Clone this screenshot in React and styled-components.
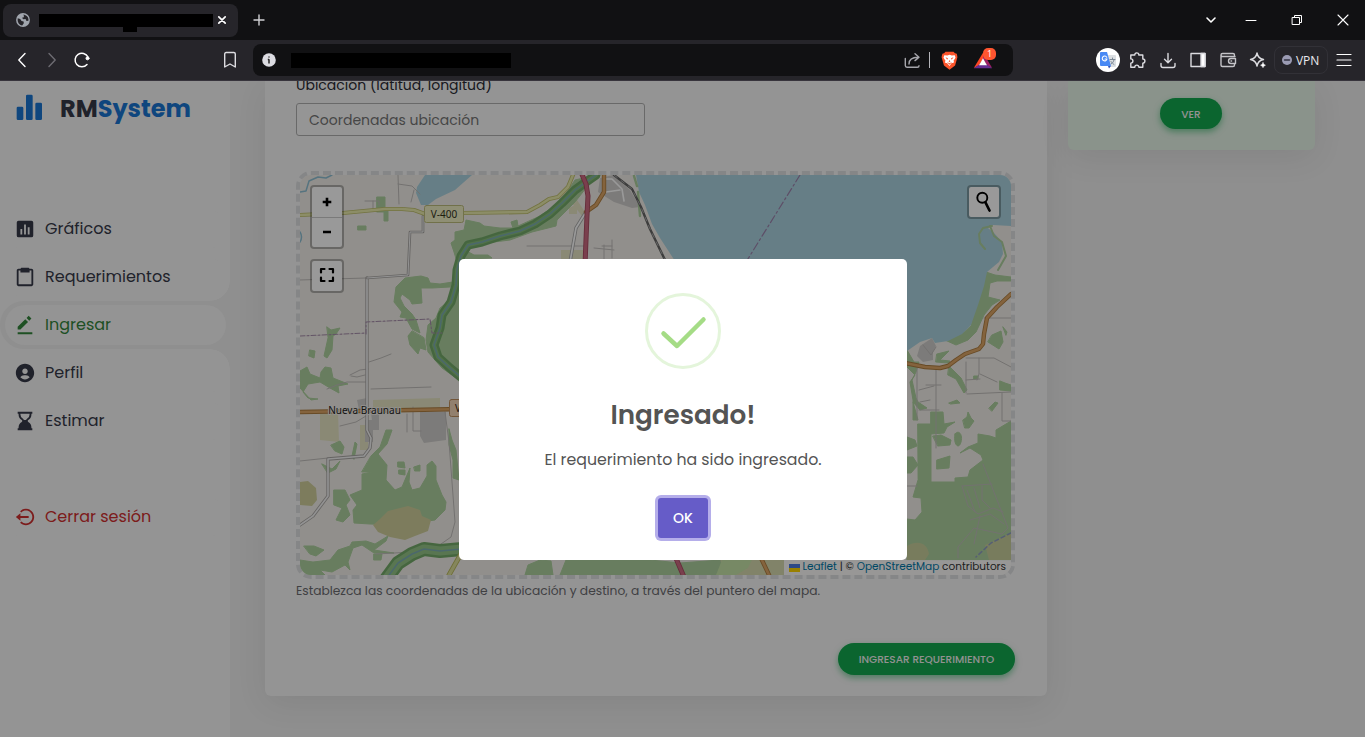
import React from 'react';
import styled, { createGlobalStyle, css } from 'styled-components';
import {
  BiSolidBarChartAlt2,
  BiSolidBarChartSquare,
  BiClipboard,
  BiSolidEditAlt,
  BiSolidUserCircle,
  BiSolidHourglassBottom,
  BiLogOutCircle,
} from 'react-icons/bi';

const GlobalStyle = createGlobalStyle`
  *, *::before, *::after { box-sizing: border-box; }
  body { margin: 0; background: #eee; font-family: Poppins, Inter, sans-serif; overflow: hidden; }
`;

const Window = styled.div`
  display: flex;
  flex-direction: column;
  width: 1365px;
  height: 737px;
  overflow: hidden;
`;

/* ---------- browser chrome ---------- */

const TabStrip = styled.div`
  display: flex;
  align-items: center;
  height: 40px;
  padding: 0 0 0 3px;
  background: #111113;
  flex: none;
`;

const Tab = styled.div`
  display: flex;
  align-items: center;
  width: 235px;
  height: 33px;
  padding: 0 10px 0 13px;
  border-radius: 8px;
  background: #26252a;
`;

const Redacted = styled.div`
  width: ${(p) => p.$w}px;
  height: ${(p) => p.$h}px;
  margin-left: ${(p) => p.$ml}px;
  background: #000;
  flex: none;
`;

const TabTitle = styled(Redacted)`
  position: relative;
  &::after {
    content: '';
    position: absolute;
    left: 84px;
    top: 13px;
    width: 14px;
    height: 5px;
    background: #000;
  }
`;

const Icon = styled.svg`
  display: block;
  flex: none;
  width: ${(p) => p.$w || p.$s}px;
  height: ${(p) => p.$s}px;
  margin-left: ${(p) => p.$ml || 0}px;
  fill: none;
  stroke: ${(p) => p.$c || '#dcdce0'};
  stroke-width: ${(p) => p.$sw || 1.4};
  stroke-linecap: round;
  stroke-linejoin: round;
`;

const Toolbar = styled.div`
  display: flex;
  align-items: center;
  height: 41px;
  padding-left: 12px;
  background: #26252a;
  border-bottom: 1px solid #37343c;
  flex: none;
`;

const AddressBar = styled.div`
  display: flex;
  align-items: center;
  width: 760px;
  height: 32px;
  margin-left: 14px;
  padding-left: 9px;
  border-radius: 8px;
  background: #111113;
`;

const Divider = styled.div`
  width: 1px;
  height: 16px;
  margin-left: 8px;
  background: #b5b5ba;
`;

const RewardsSlot = styled.div`
  position: relative;
  margin-left: 15px;
`;

const RewardsBadge = styled.span`
  position: absolute;
  left: 10px;
  top: -4px;
  width: 13px;
  height: 12px;
  border-radius: 5px;
  background: #ff5530;
  color: #fff;
  font: 9px/12px "Open Sans", sans-serif;
  text-align: center;
`;

const VpnButton = styled.div`
  display: flex;
  align-items: center;
  gap: 4px;
  width: 54px;
  height: 28px;
  margin-left: 7px;
  padding-left: 7px;
  border: 1px solid #323137;
  border-radius: 8px;
  color: #e9e9ee;
  font: 12px "Open Sans", sans-serif;
  letter-spacing: -0.1px;
`;

function BrowserChrome() {
  return (
    <>
      <TabStrip>
        <Tab>
          <Icon $s={14} viewBox="0 0 16 16" $c="none">
            <circle cx="8" cy="8" r="7.9" fill="#a0a5ad" />
            <path d="M2 6 4.800 6.800 6.300 9l2.400.6.2 2.200-1.800 2.500C3.500 13.600 1.300 10.500 2 6ZM8 2l1.300 1-.8 2L6.800 5.500l1.500 1.700 2.600-.4 1.100 2.300 2.200-.2C15 4.800 11.500 1.800 8 2Z" fill="#26252a" />
          </Icon>
          <TabTitle $w={174} $h={13} $ml={9} />
          <Icon $s={10} $ml={4} viewBox="0 0 10 10" $c="#fff" $sw={1.7}><path d="M1.800 1.800l6.400 6.400M8.200 1.800 1.800 8.200" /></Icon>
        </Tab>
        <Icon $s={12} $ml={15} viewBox="0 0 12 12" $c="#d0d0d4"><path d="M6 1v10M1 6h10" /></Icon>
        <Icon $s={12} $ml={940} viewBox="0 0 12 12" $c="#fff" $sw={1.6}><path d="M2 4l4 4 4-4" /></Icon>
        <Icon $s={12} $ml={28} viewBox="0 0 12 12" $c="#fff" $sw={1}><path d="M1 6.500h10" /></Icon>
        <Icon $s={12} $ml={34} viewBox="0 0 12 12" $c="#fff" $sw={1}><path d="M1.500 3.500h7v7h-7zM3.500 3.500v-2h7v7h-2" /></Icon>
        <Icon $s={12} $ml={34} viewBox="0 0 12 12" $c="#fff" $sw={1.1}><path d="M1 1l10 10M11 1 1 11" /></Icon>
      </TabStrip>
      <Toolbar>
        <Icon $s={20} viewBox="0 0 20 20" $c="#fff"><path d="M13 3.500 6.800 10l6.200 6.500" /></Icon>
        <Icon $s={20} $ml={10} viewBox="0 0 20 20" $c="#6d6c72"><path d="M7 3.500 13.200 10 7 16.500" /></Icon>
        <Icon $s={20} $ml={10} viewBox="0 0 20 20" $c="#fff" $sw={1.5}>
          <path d="M15 14.500A6.800 6.800 0 1 1 16 7" /><circle cx="15.500" cy="8.300" r="1.500" fill="#fff" strokeWidth="1" />
        </Icon>
        <Icon $s={18} $ml={129} viewBox="0 0 18 18"><path d="M3.700 3q0-1.500 1.500-1.500h7.600q1.500 0 1.500 1.500v13L9 13l-5.300 3Z" /></Icon>
        <AddressBar>
          <Icon $s={14} viewBox="0 0 14 14" $c="none">
            <circle cx="7" cy="7" r="6.800" fill="#dcdce2" />
            <path d="M7 6.300V10.500M7 3.600V4.500M5.800 6.400H7" stroke="#222" strokeWidth="1.500" strokeLinecap="butt" />
          </Icon>
          <Redacted $w={220} $h={15} $ml={15} />
          <Icon $s={17} $ml={393} viewBox="0 0 17 17" $c="#a6a6ac"><path d="M1.300 6.500v7q0 1.700 1.700 1.700h10.500q1.500 0 1.500-1.500M5 12c0-5 3-6.800 9-6.800M11 1.800l4 3.400-4 3.400" /></Icon>
          <Divider />
          <Icon $s={19} $w={17} $ml={11} viewBox="0 0 17 19" $c="none">
            <path d="M4.500.7h8l1.500 1.600 1.800.4.400 2.100.2 1.500-2.300 8.300-5.600 4.200L3 14.600.6 6.300.9 4.600l.5-1.900 1.700-.4Z" fill="#fb542b" />
            <path d="m3.300 4.300 3 .1 2.200-.6 2.300.6 3-.1.700 2.500-2 3 .7 1.500-1.500.7-1 .1L8.500 15l-2.300-2.800-1-.1-1.400-.7.700-1.600-2-3Z" fill="#fff" />
            <path d="m4.500 6.300 2.500.9-.8 1.500Zm8 0L10 7.200l.7 1.500ZM8.500 9l.9 1.500-.9.500-.9-.5ZM6 11l2.500 1.300L11 11l-2.500 2.800Z" fill="#fb542b" />
          </Icon>
          <RewardsSlot>
            <Icon $s={17} $w={20} viewBox="0 0 20 17" $c="none">
              <path d="M10 .8.8 16l5-2.500L10 7Z" fill="#ff4724" />
              <path d="M10 .8 19.200 16l-5-2.500L10 7Z" fill="#9e1f63" />
              <path d="m.8 16.200 5-3.400h8.400l5 3.400Z" fill="#662d91" />
              <path d="m10 6.300 4 6.900H6Z" fill="#fff" />
            </Icon>
            <RewardsBadge>1</RewardsBadge>
          </RewardsSlot>
        </AddressBar>
        <Icon $s={24} $ml={83} viewBox="0 0 24 24" $c="none">
          <circle cx="12" cy="12" r="12" fill="#fff" />
          <path d="M11 7h8q1 0 1 1v10q0 1-1 1h-4Z" fill="#dcdfe2" />
          <path d="M5 4h6l4 14H5q-1 0-1-1V5q0-1 1-1Z" fill="#4889f4" />
          <path d="m12 18h3l-2 2.500Z" fill="#3051b8" />
          <path d="M10.700 9.200A2.400 2.400 0 1 0 11 11H9" stroke="#fff" strokeWidth="1.100" />
          <path d="M14 11.500h5M16.500 10v1.500M18 12c-.5 2-1.500 3-3 4M15 13.500c1 1.500 2 2.300 3 3" stroke="#7b8794" strokeWidth="1" />
        </Icon>
        <Icon $s={18} $ml={9} viewBox="0 0 18 18"><path d="M1.800 4h4a2 2 0 1 1 4-.3V4h4v4a2 2 0 1 1 0 4.200v4H9.900a2 2 0 0 0-4.100 0h-4v-4.100a2.100 2.100 0 0 0 0-4.200Z" /></Icon>
        <Icon $s={18} $ml={12} viewBox="0 0 18 18"><path d="M9 2.500v9M5.500 8.300 9 11.800l3.500-3.500M2 12.500v2q0 2 2 2h10q2 0 2-2v-2" /></Icon>
        <Icon $s={18} $ml={12} viewBox="0 0 18 18"><path d="M2 2.500h14v13H2z" /><path d="M12 2.500h4v13h-4z" fill="#fff" /></Icon>
        <Icon $s={18} $ml={12} viewBox="0 0 18 18" $c="#c4c4c8"><path d="M15.500 5.500V4q0-1.500-1.500-1.500H3.500Q2 2.500 2 4v10q0 1.500 1.500 1.500H14q1.500 0 1.500-1.500v-1.500M2 4q0 1.500 1.500 1.500H16M16.500 7.500h-4.500a2.500 2.500 0 0 0 0 5h4.500ZM12 10h.6" /></Icon>
        <Icon $s={18} $ml={12} viewBox="0 0 18 18"><path d="M8 2q1 5.500 6.500 6.500Q9 9.500 8 15 7 9.500 1.500 8.500 7 7.500 8 2Z" /><path d="M14 11.500q.5 2.300 2.500 2.700-2 .5-2.500 2.600-.5-2.100-2.500-2.600 2-.4 2.500-2.700Z" fill="#fff" strokeWidth=".5" /></Icon>
        <VpnButton>
          <Icon $s={10} viewBox="0 0 10 10" $c="none"><circle cx="5" cy="5" r="5" fill="#9b9bb3" /><path d="M2.500 5h5" stroke="#333343" /></Icon>
          VPN
        </VpnButton>
        <Icon $s={16} $ml={8} viewBox="0 0 16 16" $c="#fff" $sw={1.2}><path d="M1 2.500h14M1 8h14M1 13.500h14" /></Icon>
      </Toolbar>
    </>
  );
}

/* ---------- application shell ---------- */

const Viewport = styled.main`
  position: relative;
  display: flex;
  align-items: flex-start;
  flex: 1;
  min-height: 0;
  overflow: hidden;
  background: #eee;
`;

const Sidebar = styled.aside`
  width: 230px;
  height: 656px;
  flex: none;
  background: #f7f7f7;
`;

const Brand = styled.div`
  display: flex;
  align-items: center;
  height: 54px;
  padding-left: 14px;
  color: #1976d2;
  svg { width: 32px; height: 32px; flex: none; }
`;

const BrandName = styled.span`
  margin-left: 14px;
  font-weight: 700;
  font-size: 24px;
  em { font-style: normal; color: #363949; }
`;

const Menu = styled.nav`
  display: flex;
  flex-direction: column;
  margin-top: ${(p) => p.$mt}px;
`;

const notch = css`
  position: relative;
  border-radius: 24px 0 0 24px;
  background: #eee;
  &::before, &::after {
    content: '';
    position: absolute;
    right: 0;
    width: 20px;
    height: 20px;
  }
  &::before { top: -20px; background: radial-gradient(circle at 0 0, #f7f7f7 19.5px, #eee 20px); }
  &::after { bottom: -20px; background: radial-gradient(circle at 0 100%, #f7f7f7 19.5px, #eee 20px); }
`;

const MenuItem = styled.div`
  height: 48px;
  padding: 4px 4px 4px 5px;
  ${(p) => p.$active && notch}
`;

const MenuLink = styled.a`
  display: flex;
  align-items: center;
  height: 40px;
  padding: 0 0 2px 9px;
  border-radius: 20px;
  background: #f7f7f7;
  color: ${(p) => p.$color || '#363949'};
  font-size: 16px;
  svg { width: 22px; height: 22px; flex: none; margin-top: 2px; }
`;

const MenuText = styled.span`
  margin-left: 9px;
  white-space: nowrap;
`;

const FormCard = styled.section`
  display: flex;
  flex-direction: column;
  width: 782px;
  height: 615px;
  margin-left: 35px;
  padding: 0 32px 0 31px;
  border-radius: 0 0 6px 6px;
  background: #f7f7f7;
  box-shadow: 0 8px 32px rgba(0, 0, 0, 0.07);
  flex: none;
`;

const FieldLabel = styled.label`
  margin-top: -7px;
  height: 22px;
  font-size: 14px;
  line-height: 22px;
  color: #2b2b33;
  white-space: nowrap;
`;

const Field = styled.div`
  display: flex;
  align-items: center;
  width: 349px;
  height: 33px;
  margin-top: 7px;
  padding: 2px 0 0 12px;
  border: 1px solid #b0b0b0;
  border-radius: 3px;
  background: #f9f9f9;
  color: #757575;
  font-size: 14px;
`;

const MapFrame = styled.div`
  position: relative;
  width: 719px;
  height: 408px;
  margin-top: 35px;
  border: 4px dashed #dedfe1;
  border-radius: 15px;
  overflow: hidden;
  flex: none;
`;

const MapSvg = styled.svg`
  display: block;
  width: 711px;
  height: 400px;
`;

const MapControls = styled.div`
  position: absolute;
  left: 10px;
  top: 10px;
  display: flex;
  flex-direction: column;
  gap: 10px;
`;

const ControlGroup = styled.div`
  width: 34px;
  border: 2px solid rgba(0, 0, 0, 0.28);
  border-radius: 4px;
  background: #fff;
  background-clip: padding-box;
`;

const ControlButton = styled.div`
  display: flex;
  align-items: center;
  justify-content: center;
  height: 30px;
  padding-bottom: ${(p) => p.$lift || 0}px;
  & + & { border-top: 1px solid #ccc; }
`;

const SearchControl = styled(ControlGroup)`
  position: absolute;
  right: 10px;
  top: 10px;
`;

const Attribution = styled.div`
  position: absolute;
  right: 0;
  bottom: 0;
  display: flex;
  align-items: center;
  justify-content: space-between;
  width: 227px;
  height: 15px;
  padding: 0 5px;
  background: rgba(255, 255, 255, 0.8);
  color: #333;
  font-size: 10.5px;
  line-height: 13px;
  white-space: pre;
  a { color: #0078a8; }
  span { margin-bottom: 2px; }
`;

const Hint = styled.p`
  margin: 3px 0 0;
  font-size: 12.25px;
  line-height: 18px;
  color: #6b6b70;
  white-space: nowrap;
`;

const PillButton = styled.button`
  align-self: ${(p) => p.$align || 'center'};
  width: ${(p) => p.$w}px;
  height: ${(p) => p.$h}px;
  margin-top: ${(p) => p.$mt}px;
  margin-right: ${(p) => p.$mr || 0}px;
  padding: ${(p) => p.$pt || 0}px 0 0;
  border: 0;
  border-radius: 16px;
  background: #13a84f;
  color: #f3f3f3;
  font-family: inherit;
  font-size: 10.5px;
  font-weight: 500;
  white-space: nowrap;
  box-shadow: 0 3px 6px rgba(19, 168, 79, 0.5);
`;

const InfoCard = styled.section`
  display: flex;
  flex-direction: column;
  width: 247px;
  height: 69px;
  margin-left: 21px;
  border-radius: 0 0 6px 6px;
  background: #e6f5e8;
  box-shadow: 0 8px 32px rgba(0, 0, 0, 0.07);
`;

/* ---------- dialog ---------- */

const Backdrop = styled.div`
  position: absolute;
  inset: 0;
  display: flex;
  align-items: center;
  justify-content: center;
  padding: 1px 0 0 1px;
  background: rgba(0, 0, 0, 0.4);
`;

const Dialog = styled.div`
  display: flex;
  flex-direction: column;
  align-items: center;
  width: 448px;
  height: 301px;
  padding-top: 34px;
  border-radius: 5px;
  background: #fff;
`;

const SuccessIcon = styled.svg`
  width: 76px;
  height: 76px;
  fill: none;
  flex: none;
`;

const DialogTitle = styled.h2`
  margin: 26px 0 0;
  font-size: 26.25px;
  line-height: 40px;
  font-weight: 600;
  color: #545454;
`;

const DialogText = styled.p`
  margin: 13px 0 0;
  font-size: 15.75px;
  line-height: 24px;
  color: #545454;
`;

const ConfirmButton = styled.button`
  width: 50px;
  height: 40px;
  margin-top: 26px;
  padding: 0;
  border: 0;
  border-radius: 3px;
  background: #665cc8;
  color: #fff;
  font: 500 14px Poppins, Inter, sans-serif;
  box-shadow: 0 0 0 3px #b5aeea;
`;

/* ---------- map drawing ---------- */

const FOREST = '#add19e';

const woods = [
  'M596 175 575 180 560 202 540 216 518 226 517 220 511 222 513 228 500 228 484 226 480 223 466 220 464 230 455 232 455 240 451 243 454 252 457 262 455 285 450 300 440 308 436 318 428 325 426 340 428 352 442 368 459 380V262L467 259 492 258 488 255 474 255 465 250 478 244 510 240 532 232 556 226 557 220 575 202Z',
  'M377 197h8v12h3v12h-4v-9h-7zM358 226h8v4h-8z',
  'M459 281 440 284 430 283 428 278 421 276 405 278 396 287 394 302 402 312 400 317 406 318 412 329 420 333 416 320 412 314 404 306 400 298 402 294 410 300 412 304 422 303 421 288 432 288 450 287Z',
  'M412 331 408 336 410 345 418 354 420 348 426 350 424 338ZM327 327 331 330 340 328 336 334 333 336 332 350 327 358 324 356 328 338Z',
  'M300 371 307 367 310 374 320 378 321 372 325 367 331 368 333 378 348 384 338 386 339 393 330 388 320 382 308 384 303 392 308 398 318 399 311 400 300 388ZM310 350l5 1-1 7-5-2z',
  'M331 445 340 441 344 447 342 454 335 451ZM352 456 355 442 357 444 354 459ZM322 464l10 5 8-8-4 8-8 4z',
  'M371 456 380 447 386 430 392 430 387 444 378 454 387 465 386 480 395 490 402 487 410 468 409 482 412 490 420 488 427 476 427 465 432 461 436 466 436 480 442 495 446 502 445 510 435 520 400 525 370 524 354 523 353 510 357 505 350 495 362 490 362 474 372 472 362 472Z',
  'M334 490 345 490 350 500 346 505 350 515 343 522 336 520 342 508 334 505ZM398 462 404 462 405 468 398 467ZM399 470h6v5l-6-1ZM414 467l6-2 0 6-5 0Z',
  'M449 429 452 440 456 450 459 480 453 478 453 460 449 445Z',
  'M300 560 313 562 330 560 338 550 350 546 352 542 366 541 375 544 388 536 386 541 374 550 394 553 374 553 362 545 353 548 348 562 350 570 345 565 332 572 320 570 325 575H300ZM304 546 314 546 324 550 316 556 310 554ZM374 554h8l-1 6h-7Z',
  'M525 575 528 565 540 560 551 561 553 575ZM560 575 566 560 610 558 650 560 680 563 720 560 722 575Z',
  'M907 350 914 362 919 362 916 372 912 380 916 398 918 402 927 408 920 410 913 402 918 420 913 420 913 400 910 382 915 375 907 367ZM937 354l12 -3 -9 9 10 1-2 2-12-1zM949 366l12 12 6 12-3 3-8-14-8-4ZM974 376l4 0 0 3-4 0Z',
  'M983 271 995 275 1011 277 1011 281 997 281 990 283 988 297 1000 300 992 305 984 315 976 332 968 340 956 345 945 340 962 334 971 326Z',
  'M992 335 1001 331 1003 342 999 349 988 342ZM1000 381l5 2 6 2v6l-11-1ZM1003 327l4 5-1 3Z',
  'M931 412 943 412 944 424 955 422 947 427 944 433 931 434ZM933 436l8-1 10 5-1 5-12 1ZM955 434c4-5 8 1 6 8-2 8-8 3-6-8ZM963 420l4-3 1-5 3 6 3 3-5 7-4 0ZM989 408l6-6 3 1-6 8ZM937 460l13-4-1 12-12 1ZM949 403l8-3 3 3-9 1Z',
  'M918 424 931 424 931 482 955 482 955 478 968 477 970 470 983 460 981 455 970 448 960 453 968 447 978 443 978 434 990 436 996 438 996 430 1011 421V560H907V519L915 520 922 512 921 498 913 497 918 480Z',
  'M907 437l8 3 2 6-10 4ZM907 457h6l5 8-7 8h-4Z',
];

const lanes = [
  'M300 280 366 278M398 175 399 204M398 184l14 2 8 8M365 201h14v4M373 201v9M414 190l-3 12',
  'M369 362l12-4 10-4M371 389 431 387M300 461 328 458M351 376l6 1 8-2M350 375l10-5 8-1M364 336',
  'M327 389l10-4 10-3h20M407 414v18M413 407v24h8M445 412l4 30 6 80-4 15-20 14-55 3M340 426l16-4 10-6',
  'M527 246h60M594 248l20 2M604 245v15M602 246h10M612 240v18',
  'M917 365V420M926 385h15M936 368v80M919 390l15-4M966 362v31M966 380l14-1M979 358v16l-2 6M966 358h28l17 9M980 374l17 8M1002 393v28h9M967 394l44-2M984 318h27M907 486h10M920 402l10-2M919 410h20M923 345l8 10 5-8',
  'M983 464 1008 528 1002 534 974 528 958 547V558M962 486l30-2M962 486l6 20 10 8 15-6 10 4M967 490l8 22M974 488l6 20M982 486v14l8 8M970 520l20-6 14 10M980 516l-6 28',
];

const streets = [
  'M420 412 446 412 446 440 424 443 420 436ZM357 400l10-2v10l-8 2zM365 420h8v22h-8zM371 412h8v18h-6z',
  'M600 178 613 175 630 190 640 207 632 208 614 202 598 192ZM920 346l12-8 4 8-3 6 0 8-10 2-6-6Z',
];

const RIVER = 'M596 175 586 182 575 190 562 203 550 214 535 224 520 231 500 236 482 242 468 245 461 256 457 270 456 285 451 302 442 315 440 328 434 345 438 357 450 368 462 378';
const STREAM = 'M384 582 398 563 412 554 424 549 440 551 462 549';
const YELLOW = 'M300 215 343 213 385 209 402 209 414 210 425 214 463 213 527 212 540 205 549 199 558 197 568 187 573 175';
const ORANGE = 'M300 412 360 411 462 409M604 175V192L596 205 586 212M1011 294 997 307 987 318 984 334 983 344 979 349 965 354 956 360 948 366 940 368 925 367 905 363M760 556 770 577';
const RED = 'M581 172 586 184 588 196 587 215 585 265M675 556 684 577';
const RAIL = 'M614 175 632 189 641 207 650 229 666 262';

function CasedLine({ d, edge, fill, w }) {
  return (
    <g>
      <path d={d} stroke={edge} strokeWidth={w} />
      <path d={d} stroke={fill} strokeWidth={w - 1.7} />
    </g>
  );
}

function MapDrawing() {
  return (
    <MapSvg viewBox="300 175 711 400" fill="none" strokeLinecap="round" strokeLinejoin="round">
      <path d="M300 175h711v400H300z" fill="#f2efe9" />
      <path d="M320 414 338 412 339 442 320 440ZM373 400 440 398V408H373ZM360 425h8v25h-8ZM569 208l8-4v10h-8ZM561 250h22v10h-22ZM571 202l6-2 8 12-3 4Z" fill="#e6e5c4" />
      <path d="M713 558h71v17h-71z" fill="#d8dbb0" />
      {streets.map((d) => <path key={d} d={d} fill="#cfcdcb" />)}
      {woods.map((d) => <path key={d} d={d} fill={FOREST} stroke={FOREST} strokeWidth="1" />)}
      <path d="M722 560h30l-4 8-12 7h-20z" fill="#c6e4a8" />
      <path d="M300 482 308 481 316 488 317 500 312 506 300 505ZM373 525 380 519 388 511 400 508 408 506 420 510 422 516 431 520 428 531 415 536 405 540 390 537 378 532Z" fill="#d0cf9c" />
      <path d="M907 546c10-6 20-4 22 8l-4 6h-18zM985 545l26-12v27h-22z" fill="#c9cf9c" />
      <path d="M636 175H1011V226L993 225 988 228 994 233 1002 242 1003 254 999 262 987 272 984 286 978 305 971 325 962 334 948 341 935 343 932 338 920 342 907 351 800 400 700 300 673 258 660 238 652 224 645 205 639 192Z" fill="#aad3df" />
      <path d="M992 226 983 228 979 234 980 243 985 249M990 226l4 10 8 6 4 14-8 14" stroke={FOREST} strokeWidth="2" />
      <path d="M634 176l3 10M638 192l2 24" stroke={FOREST} strokeWidth="2.500" />
      <path d="M425 175 417 187 416 193 421 205H428L436 199 455 190 472 175Z" fill="#aad3df" />
      <path d="M300 192l6-1 3-10 9-4 8 1 6-3M300 232q3 5 0 10" stroke="#8fc0d4" strokeWidth="1.500" />
      <path d="M1011 533l-20 10-15 14" stroke="#8f9fc0" strokeWidth="1.500" strokeDasharray="4 3" />
      {lanes.map((d) => <path key={d} d={d} stroke="#c0bdbb" strokeWidth="1" />)}
      <CasedLine d="M367 278V430l4 8-1 10-6 8-36 3v37l-15 20-13 9" edge="#a9a6a4" fill="#f4f4f4" w={3.3} />
      <CasedLine d="M367 278 408 275 410 232H423V216" edge="#a9a6a4" fill="#f4f4f4" w={2.7} />
      <CasedLine d="M586 212 576 228 570 262" edge="#aaa" fill="#fff" w={3.4} />
      <path d="M606 179l6 0 10 10 2 12M606 192l14-2" stroke="#fff" strokeWidth="1.600" />
      <path d={RIVER} stroke="#74ab69" strokeWidth="9" />
      <path d={RIVER} stroke="#88bd7c" strokeWidth="4" />
      <path d={STREAM} stroke="#74ab69" strokeWidth="14" />
      <path d={STREAM} stroke="#94c588" strokeWidth="9" />
      <path d={RIVER} stroke="#7eadb4" strokeWidth="1.500" />
      <path d={STREAM} stroke="#7eadb4" strokeWidth="1.500" />
      <path d="M366 334V322L430 319l2 14h10M300 336l66-3" stroke="#a68daa" strokeWidth="1.100" strokeDasharray="5 2 2 2" />
      <path d="M800 175 746 262" stroke="#9c83ad" strokeWidth="1.200" strokeDasharray="8 3 2 3" />
      <CasedLine d={YELLOW} edge="#bfbf6c" fill="#e9ebac" w={4.2} />
      <CasedLine d="M449 575 462 552" edge="#b9b95c" fill="#dee09a" w={5} />
      <CasedLine d={ORANGE} edge="#ae7d40" fill="#dca566" w={4.4} />
      <CasedLine d={RED} edge="#a94a62" fill="#cb6a80" w={5} />
      <path d={RAIL} stroke="#666" strokeWidth="2.400" />
      <path d={RAIL} stroke="#bbb" strokeWidth=".8" strokeDasharray="4 5" />
      <rect x="424.500" y="205.500" width="39" height="17" rx="2" fill="#eeefc4" stroke="#bcbc7c" />
      <text x="444" y="217.500" textAnchor="middle" fontFamily="Noto Sans, sans-serif" fontSize="10" fill="#33331c">V-400</text>
      <rect x="449.500" y="399.500" width="30" height="17" rx="2" fill="#f3d6b7" stroke="#c09060" />
      <text x="455" y="411.500" fontFamily="Noto Sans, sans-serif" fontSize="10" fill="#332211">V</text>
      <text x="364.500" y="413.500" textAnchor="middle" fontFamily="Noto Sans, sans-serif" fontSize="10" fill="#222" stroke="#f2efe9" strokeWidth="2" paintOrder="stroke">Nueva Braunau</text>
    </MapSvg>
  );
}

const menu = [
  { label: 'Gráficos', icon: BiSolidBarChartSquare },
  { label: 'Requerimientos', icon: BiClipboard },
  { label: 'Ingresar', icon: BiSolidEditAlt, active: true, color: '#33853b' },
  { label: 'Perfil', icon: BiSolidUserCircle },
  { label: 'Estimar', icon: BiSolidHourglassBottom },
];

export default function App() {
  return (
    <Window>
      <GlobalStyle />
      <BrowserChrome />
      <Viewport>
        <Sidebar>
          <Brand><BiSolidBarChartAlt2 /><BrandName><em>RM</em>System</BrandName></Brand>
          <Menu $mt={70}>
            {menu.map(({ label, icon: Glyph, active, color }) => (
              <MenuItem key={label} $active={active}>
                <MenuLink $color={color}><Glyph /><MenuText>{label}</MenuText></MenuLink>
              </MenuItem>
            ))}
          </Menu>
          <Menu $mt={48}>
            <MenuItem><MenuLink $color="#cf2f2f"><BiLogOutCircle /><MenuText>Cerrar sesión</MenuText></MenuLink></MenuItem>
          </Menu>
        </Sidebar>
        <FormCard>
          <FieldLabel>Ubicación (latitud, longitud)</FieldLabel>
          <Field>Coordenadas ubicación</Field>
          <MapFrame>
            <MapDrawing />
            <MapControls>
              <ControlGroup>
                <ControlButton $lift={1}><Icon $s={12} viewBox="0 0 12 12" $c="#000" $sw={2.6}><path d="M6 1.700v8.600M1.700 6h8.600" strokeLinecap="butt" /></Icon></ControlButton>
                <ControlButton $lift={2}><Icon $s={12} viewBox="0 0 12 12" $c="#000" $sw={2.6}><path d="M2 6h8" strokeLinecap="butt" /></Icon></ControlButton>
              </ControlGroup>
              <ControlGroup>
                <ControlButton $lift={2}><Icon $s={16} viewBox="0 0 16 16" $c="#000" $sw={2.2}><path d="M2 5.500V2h3.500M10.500 2H14v3.500M14 10.500V14h-3.500M5.500 14H2v-3.500" /></Icon></ControlButton>
              </ControlGroup>
            </MapControls>
            <SearchControl>
              <ControlButton><Icon $s={22} viewBox="0 0 22 22" $c="#000" $sw={1.9}><circle cx="9.300" cy="6.700" r="5" /><path d="m12.500 11.500 4 8" strokeWidth="2.700" /></Icon></ControlButton>
            </SearchControl>
            <Attribution>
              <Icon $s={8} $w={11} viewBox="0 0 12 8" $c="none" preserveAspectRatio="none"><path fill="#4c7be1" d="M0 0h12v4H0z" /><path fill="#ffd500" d="M0 4h12v4H0z" /></Icon>
              <span><a>Leaflet</a> | © <a>OpenStreetMap</a> contributors</span>
            </Attribution>
          </MapFrame>
          <Hint>Establezca las coordenadas de la ubicación y destino, a través del puntero del mapa.</Hint>
          <PillButton $align="flex-end" $w={177} $h={32} $mt={43} $pt={1}>INGRESAR REQUERIMIENTO</PillButton>
        </FormCard>
        <InfoCard>
          <PillButton $w={62} $h={31} $mt={17} $mr={1} $pt={2}>VER</PillButton>
        </InfoCard>
        <Backdrop>
          <Dialog>
            <SuccessIcon viewBox="0 0 76 76">
              <circle cx="38" cy="38" r="36.500" stroke="#e4f5db" strokeWidth="3" />
              <path d="M18.500 40.500 32 53 58.500 26.500" stroke="#a5dc86" strokeWidth="4.500" strokeLinecap="round" strokeLinejoin="round" />
            </SuccessIcon>
            <DialogTitle>Ingresado!</DialogTitle>
            <DialogText>El requerimiento ha sido ingresado.</DialogText>
            <ConfirmButton>OK</ConfirmButton>
          </Dialog>
        </Backdrop>
      </Viewport>
    </Window>
  );
}
